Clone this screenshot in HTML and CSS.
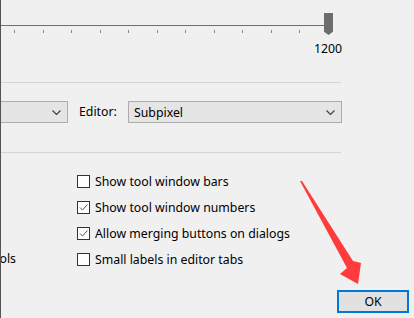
FILE: index.html
```html
<!DOCTYPE html>
<html lang="en">
<head>
    <meta charset="UTF-8">
    <title>Appearance</title>
    <link rel="stylesheet" href="styles.css">
</head>
<body>
    <div class="frame">
        <div class="slider">
            <div class="track"></div>
            <div class="thumb"></div>
            <div class="ticks">
                <i></i><i></i><i></i><i></i><i></i><i></i><i></i><i></i><i></i><i></i><i></i>
            </div>
            <div class="max">1200</div>
        </div>
        <div class="sep"></div>
        <div class="aa-row">
            <div class="combo combo-cut"><span></span><svg class="chev" width="9" height="5" viewBox="0 0 9 5"><path d="M0.5 0.5 L4.5 4.5 L8.5 0.5" fill="none" stroke="#444" stroke-width="1.2"/></svg></div>
            <span class="lbl">Editor:</span>
            <div class="combo combo-editor"><span>Subpixel</span><svg class="chev" width="9" height="5" viewBox="0 0 9 5"><path d="M0.5 0.5 L4.5 4.5 L8.5 0.5" fill="none" stroke="#444" stroke-width="1.2"/></svg></div>
        </div>
        <div class="sep sep2"></div>
        <div class="options">
            <div class="left-col">
                <div class="cut-label"><span>Tools</span></div>
            </div>
            <div class="checks">
                <label class="check"><span class="box"></span>Show tool window bars</label>
                <label class="check"><span class="box on"><svg width="11" height="11" viewBox="0 0 11 11"><path d="M2 5.5 L4.5 8 L9.5 2.5" fill="none" stroke="#555" stroke-width="1"/></svg></span>Show tool window numbers</label>
                <label class="check"><span class="box on"><svg width="11" height="11" viewBox="0 0 11 11"><path d="M2 5.5 L4.5 8 L9.5 2.5" fill="none" stroke="#555" stroke-width="1"/></svg></span>Allow merging buttons on dialogs</label>
                <label class="check"><span class="box"></span>Small labels in editor tabs</label>
            </div>
        </div>
        <div class="footer">
            <button class="ok">OK</button>
        </div>
        <svg class="arrow" width="414" height="318" viewBox="0 0 414 318">
            <polygon points="300,181 302,181 353,261 361,263 358,284 340,274 347,268" fill="#ff3b3b"/>
        </svg>
    </div>
</body>
</html>
```

FILE: styles.css
```css
*{box-sizing: border-box;}
body{
    margin: 0;
    background: #f0f0f0;
    font-family: "Noto Sans", "Segoe UI", sans-serif;
    font-size: 12.3px;
    color: #000;
}
.frame{
    position: relative;
    width: 414px;
    height: 318px;
    border-left: 1px solid #555;
    overflow: hidden;
}
.slider{
    position: relative;
    height: 82px;
}
.track{
    position: absolute;
    left: 0;
    top: 25px;
    width: 326px;
    height: 1px;
    background: #707070;
}
.thumb{
    position: absolute;
    left: 323px;
    top: 13px;
    width: 9px;
    height: 22px;
    background: #6d6d6d;
    clip-path: polygon(0 0, 100% 0, 100% 85%, 50% 100%, 0 85%);
}
.ticks{
    position: absolute;
    left: 13px;
    top: 30px;
    width: 286px;
    display: flex;
    justify-content: space-between;
}
.ticks i{
    display: block;
    width: 1px;
    height: 3px;
    background: #8a8a8a;
}
.max{
    position: absolute;
    left: 312px;
    top: 40px;
    width: 30px;
    text-align: center;
}
.sep{
    width: 340px;
    height: 1px;
    background: #d4d4d4;
}
.aa-row{
    display: flex;
    height: 69px;
    padding-top: 18px;
    align-items: flex-start;
}
.combo{
    display: flex;
    align-items: center;
    justify-content: space-between;
    height: 22px;
    background: #e5e5e5;
    border: 1px solid #adadad;
    padding: 0 6px 0 5px;
}
.combo-cut{
    width: 67px;
    border-left: none;
}
.lbl{
    margin-left: 11px;
    width: 49px;
    line-height: 22px;
}
.combo-editor{
    width: 214px;
}
.options{
    display: flex;
    padding-top: 20px;
}
.left-col{
    width: 76px;
    display: flex;
    flex-direction: column;
    justify-content: flex-end;
    padding-bottom: 1px;
}
.cut-label{
    width: 15px;
    display: flex;
    justify-content: flex-end;
    overflow: hidden;
}
.checks{
    display: flex;
    flex-direction: column;
    gap: 9px;
}
.check{
    display: flex;
    align-items: center;
    height: 17px;
}
.box{
    display: flex;
    align-items: center;
    justify-content: center;
    width: 13px;
    height: 13px;
    border: 1px solid #333;
    background: #fff;
    margin-right: 5px;
}
.footer{
    display: flex;
    justify-content: flex-end;
    padding: 22px 5px 0 0;
}
.ok{
    width: 72px;
    height: 23px;
    background: #e1e1e1;
    border: 2px solid #0078d7;
    font-family: "Noto Sans", "Segoe UI", sans-serif;
    font-size: 12.3px;
    color: #000;
    padding: 0;
}
.arrow{
    position: absolute;
    left: -1px;
    top: 0;
    pointer-events: none;
}
```
